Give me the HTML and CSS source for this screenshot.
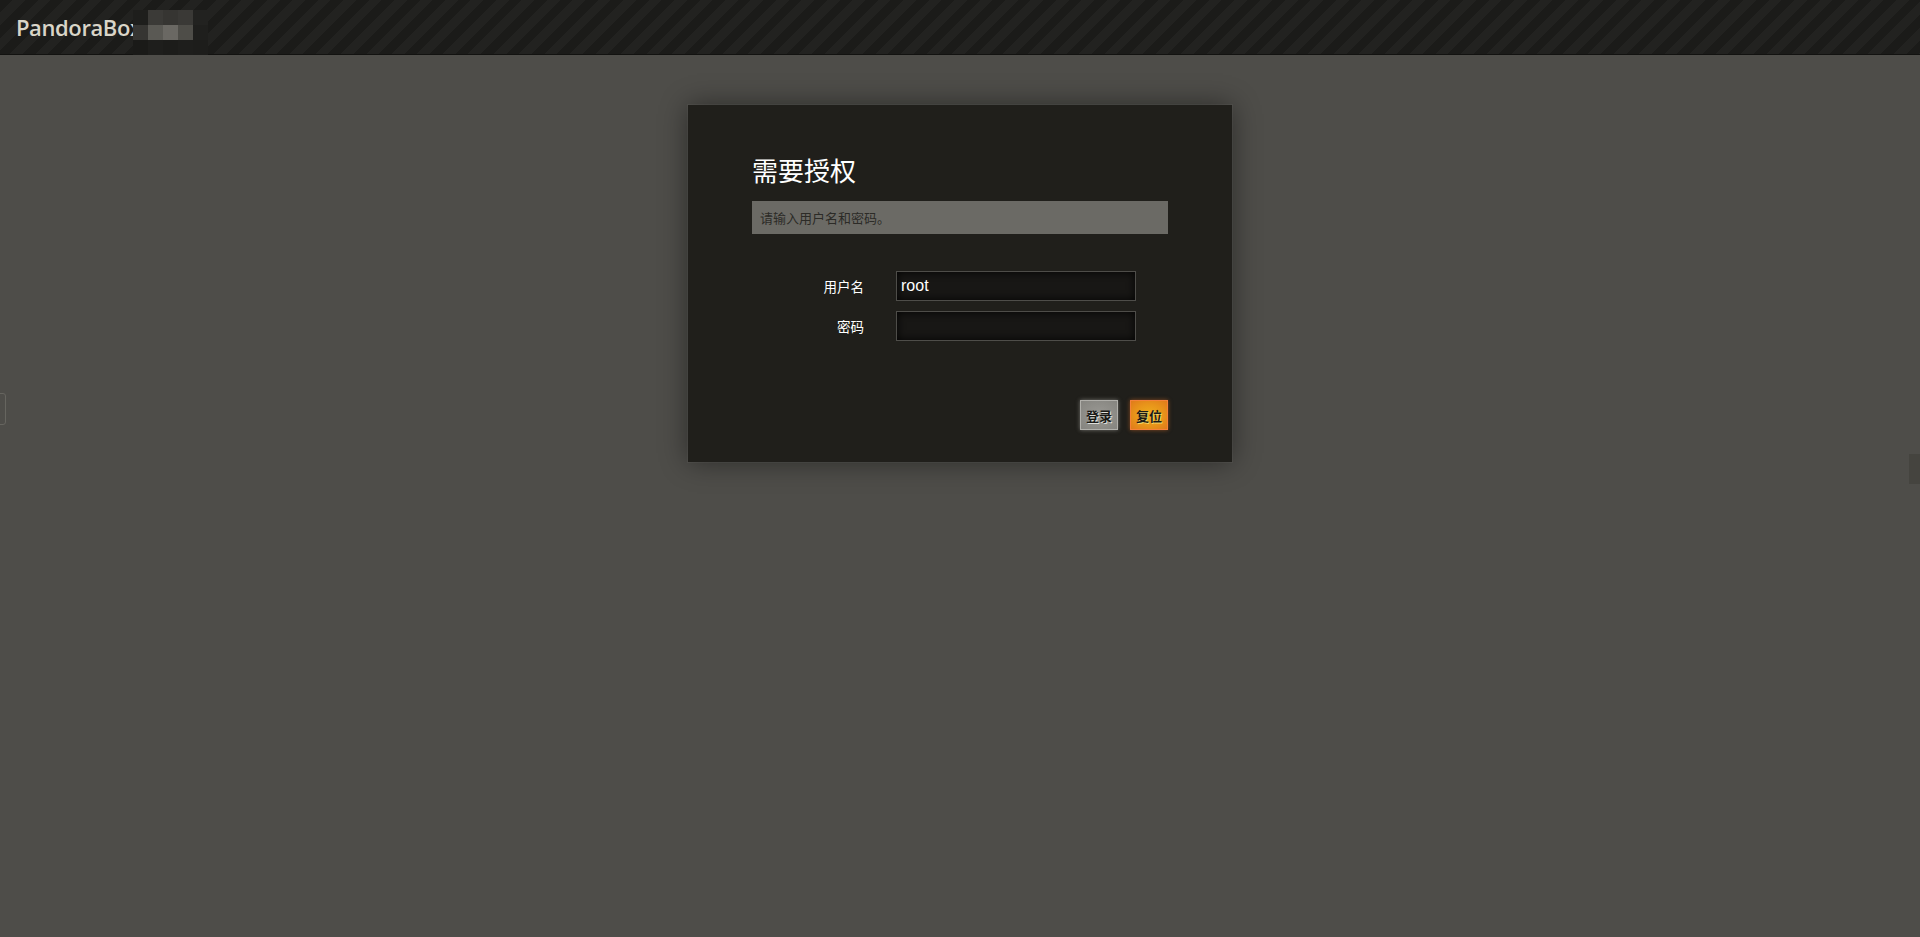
FILE: index.html
```html
<!DOCTYPE html>
<html lang="zh-CN">
<head>
<meta charset="utf-8">
<title>PandoraBox - 需要授权</title>
<link rel="stylesheet" href="styles.css">
</head>
<body>
<header class="topbar">
  <span class="brand">PandoraBox</span>
  <div class="mosaic">
    <i class="m1"></i><i class="m2"></i><i class="m3"></i><i class="m4"></i><i class="m5"></i>
    <i class="m6"></i><i class="m7"></i><i class="m8"></i><i class="m9"></i><i class="m10"></i>
    <i class="m11"></i><i class="m12"></i><i class="m13"></i><i class="m14"></i><i class="m15"></i>
  </div>
</header>
<main class="page">
  <form class="dialog">
    <h2 class="title">需要授权</h2>
    <div class="info">请输入用户名和密码。</div>
    <div class="fields">
      <label class="label" for="u">用户名</label>
      <input class="input" id="u" type="text" value="root">
      <label class="label" for="p">密码</label>
      <input class="input" id="p" type="password" value="">
    </div>
    <div class="actions">
      <button type="button" class="btn btn-gray">登录</button>
      <button type="button" class="btn btn-orange">复位</button>
    </div>
  </form>
</main>
<div class="edge-left"></div>
<div class="edge-right"></div>
</body>
</html>
```
FILE: styles.css
```css
html, body {
  margin: 0;
  padding: 0;
  height: 100%;
}
body {
  background: #4e4d49;
  font-family: "Liberation Sans", "Noto Sans CJK SC", sans-serif;
  color: #fff;
  overflow: hidden;
}
.topbar {
  position: relative;
  height: 54px;
  border-bottom: 1px solid #121210;
  background: repeating-linear-gradient(135deg, #1b1b19 0px, #1b1b19 9px, #222220 9px, #222220 18px);
  display: flex;
  align-items: center;
  padding-left: 16px;
  box-sizing: content-box;
}
.brand {
  font-family: "Open Sans", "DejaVu Sans", sans-serif;
  font-size: 22px;
  font-weight: 600;
  color: #d9d5c8;
  letter-spacing: -0.4px;
  margin-top: -1px;
}
.mosaic {
  position: absolute;
  left: 133px;
  top: 10px;
  display: grid;
  grid-template-columns: repeat(5, 15px);
  grid-template-rows: 15px 15px 15px;
}
.mosaic i { display: block; }
.m1 { background: #1e1e1c; }
.m2 { background: #3b3a37; }
.m3 { background: #363532; }
.m4 { background: #3a3936; }
.m5 { background: #222220; }
.m6 { background: #363532; }
.m7 { background: #5a5954; }
.m8 { background: #6a6863; }
.m9 { background: #4e4d48; }
.m10 { background: #1f1f1d; }
.m11 { background: #1a1a18; }
.m12 { background: #1e1e1c; }
.m13 { background: #1c1c1a; }
.m14 { background: #1e1e1c; }
.m15 { background: #1d1d1b; }

.page {
  display: flex;
  justify-content: center;
  padding-top: 50px;
}
.dialog {
  width: 544px;
  box-sizing: border-box;
  background: #201f1b;
  padding: 49px 64px 32px;
  margin: 0;
  box-shadow: 0 0 0 1px rgba(255,255,255,0.04), 0 0 26px rgba(0,0,0,0.45);
}
.title {
  margin: 0 0 16px;
  font-family: "Noto Sans CJK SC", sans-serif;
  font-weight: normal;
  font-size: 26px;
  line-height: 31px;
  color: #fff;
}
.info {
  background: #6b6a65;
  height: 33px;
  line-height: 33px;
  padding-left: 8px;
  font-family: "Noto Sans CJK SC", sans-serif;
  font-size: 13px;
  color: #2c2b27;
}
.fields {
  display: grid;
  grid-template-columns: 112px 240px;
  column-gap: 32px;
  row-gap: 10px;
  align-items: center;
  margin-top: 37px;
}
.label {
  text-align: right;
  font-family: "Noto Sans CJK SC", sans-serif;
  font-size: 13.5px;
  color: #fff;
}
.input {
  width: 240px;
  height: 30px;
  box-sizing: border-box;
  margin: 0;
  border: 1px solid #4e4d49;
  background: #181715;
  box-shadow: inset 0 0 8px rgba(0,0,0,0.9);
  color: #fff;
  font-family: "Liberation Sans", sans-serif;
  font-size: 16px;
  padding: 0 4px;
  outline: none;
}
.actions {
  display: flex;
  justify-content: flex-end;
  gap: 12px;
  margin-top: 59px;
}
.btn {
  width: 38px;
  height: 30px;
  box-sizing: border-box;
  padding: 0;
  font-family: "Noto Sans CJK SC", sans-serif;
  font-size: 13px;
  font-weight: bold;
  color: #1a1a17;
  cursor: pointer;
}
.btn-gray {
  border: 1px solid #b0afaa;
  background: radial-gradient(ellipse at center, #9a9994 0%, #85847f 100%);
  box-shadow: 0 0 4px rgba(200,200,195,0.5);
  text-shadow: 1px 1px 0 #e0e0dc;
}
.btn-orange {
  border: 1px solid #f5823a;
  background: radial-gradient(ellipse at center, #eeae1c 0%, #e8941a 55%, #e07a1a 100%);
  box-shadow: 0 0 4px rgba(240,120,40,0.5);
  text-shadow: 1px 1px 0 #f6d86a;
}
.edge-left {
  position: fixed;
  left: -3px;
  top: 393px;
  width: 7px;
  height: 30px;
  border: 1px solid #66655f;
  border-radius: 3px;
}
.edge-right {
  position: fixed;
  right: 0;
  top: 454px;
  width: 11px;
  height: 30px;
  background: #45443f;
}
```
